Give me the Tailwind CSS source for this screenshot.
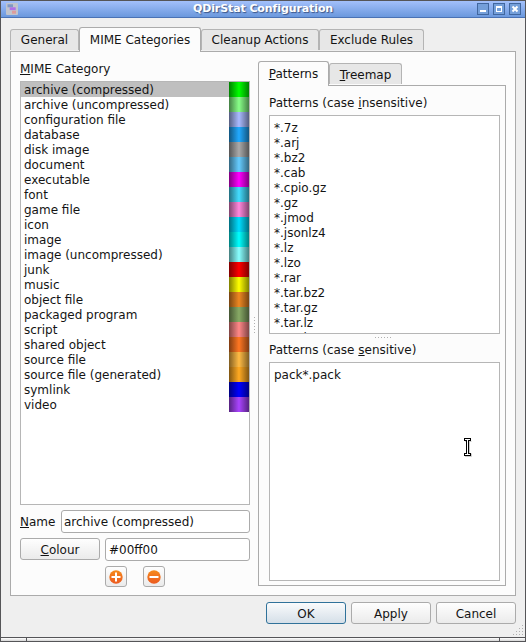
<!DOCTYPE html>
<html lang="en">
<head>
<meta charset="utf-8">
<title>QDirStat Configuration</title>
<script src="https://cdn.jsdelivr.net/npm/@tailwindcss/browser@4"></script>
</head>
<body class="overflow-hidden">
<div class="relative flex h-[642px] w-[526px] flex-col border border-[#555558] bg-[#efefef] font-['DejaVu_Sans',sans-serif] text-[12px] leading-[15px] text-[#141414]">
  <header class="relative flex h-[17px] shrink-0 items-center border-b border-[#4a72b4] bg-linear-to-b from-[#a3c0fb] to-[#6b98dd]">
    <svg class="ml-[5px] size-[12px] shrink-0" viewBox="0 0 12 12"><rect width="12" height="12" rx="1" fill="#c0c4cc"/><rect x="1.500" y="1.300" width="5.500" height="3" fill="#7f98c4"/><rect x="3.700" y="4.300" width="6" height="2.800" fill="#b070e8"/><rect x="6" y="7.700" width="4" height="3" fill="#dd9c9c"/></svg>
    <h1 class="absolute inset-x-0 top-0 text-center text-[11px] font-bold tracking-[-0.1px] text-white [text-shadow:1px_1px_1px_#3c5687]">QDirStat Configuration</h1>
    <div class="ml-auto mr-[4px] flex gap-[4px]">
      <svg class="size-[12px]" viewBox="0 0 12 12"><rect x=".5" y=".5" width="11" height="11" fill="#749fda" stroke="#41679f"/><path d="M3 7h6v2H3z" fill="#fff"/></svg>
      <svg class="size-[12px]" viewBox="0 0 12 12"><rect x=".5" y=".5" width="11" height="11" fill="#749fda" stroke="#41679f"/><path d="M3 3h6v6H3zM4 5v3h4V5z" fill="#fff" fill-rule="evenodd"/></svg>
      <svg class="size-[12px]" viewBox="0 0 12 12"><rect x=".5" y=".5" width="11" height="11" fill="#749fda" stroke="#41679f"/><path d="M3.500 3.500l5 5M8.500 3.500l-5 5" stroke="#fff" stroke-width="2"/></svg>
    </div>
  </header>

  <main class="flex flex-1 flex-col px-[9px] pt-[9px]">
    <nav class="relative z-10 flex h-[24px] items-end">
      <div class="mb-[1px] flex h-[21px] w-[69px] items-center justify-center rounded-t-[3px] border border-b-0 border-[#b4b4b4] bg-[#e7e7e7] pt-px">General</div>
      <div class="mb-[-1px] flex h-[25px] w-[122px] items-center justify-center rounded-t-[3px] border border-b-0 border-[#ababab] bg-[#fcfcfc]">MIME Categories</div>
      <div class="mb-[1px] flex h-[21px] w-[118px] items-center justify-center rounded-t-[3px] border border-b-0 border-[#b4b4b4] bg-[#e7e7e7] pt-px">Cleanup Actions</div>
      <div class="mb-[1px] flex h-[21px] w-[105px] items-center justify-center rounded-t-[3px] border border-b-0 border-[#b4b4b4] bg-[#e7e7e7] pt-px">Exclude Rules</div>
    </nav>
    <section class="flex h-[545px] w-[506px] shrink-0 border border-[#ababab] bg-[#fcfcfc]">
      <div class="ml-[9px] flex w-[230px] flex-col pt-[10px]">
        <label><u class="underline-offset-1">M</u>IME Category</label>
        <ul id="categories" class="mt-[4px] h-[424px] border border-[#b6b6b6] bg-white"></ul>
        <div class="mt-[5px] flex h-[23px] items-center justify-between">
          <label class="pt-[2px]"><u class="underline-offset-1">N</u>ame</label>
          <div class="flex h-[23px] w-[189px] items-center rounded-[3px] border border-[#ababab] bg-white pt-[2px] pl-[2px]">archive (compressed)</div>
        </div>
        <div class="mt-[5px] flex h-[23px] items-start justify-between">
          <button class="h-[22px] w-[80px] rounded-[3px] border border-[#ababab] bg-linear-to-b from-[#fefefe] to-[#ebebeb] pt-[2px]"><u class="underline-offset-1">C</u>olour</button>
          <div class="flex h-[23px] w-[145px] items-center rounded-[3px] border border-[#ababab] bg-white pt-[2px] pl-[3px]">#00ff00</div>
        </div>
        <div class="mt-[5px] ml-[85px] flex gap-[16px]">
          <button class="flex h-[21px] w-[22px] items-center justify-center rounded-[3px] border border-[#ababab] bg-linear-to-b from-[#fefefe] to-[#ebebeb]"><svg class="size-[14px]" viewBox="0 0 14 14"><defs><linearGradient id="orange" x2="0" y2="1"><stop stop-color="#f58a1c"/><stop offset="1" stop-color="#ec5a20"/></linearGradient></defs><circle cx="7" cy="7" r="6.700" fill="url(#orange)"/><path d="M7 2.500v9M2.500 7h9" stroke="#fff" stroke-width="2"/></svg></button>
          <button class="flex h-[21px] w-[22px] items-center justify-center rounded-[3px] border border-[#ababab] bg-linear-to-b from-[#fefefe] to-[#ebebeb]"><svg class="size-[14px]" viewBox="0 0 14 14"><circle cx="7" cy="7" r="6.700" fill="url(#orange)"/><path d="M2.500 7h9" stroke="#fff" stroke-width="2"/></svg></button>
        </div>
      </div>
      <div class="flex w-[8px] items-center justify-center pt-[3px]"><div class="h-[16px] w-px bg-[repeating-linear-gradient(#b0b0b0_0_1px,transparent_1px_3px)]"></div></div>
      <div class="flex w-[248px] flex-col pt-[9px]">
        <nav class="relative z-10 flex h-[24px] items-end">
          <div class="mb-[-1px] flex h-[25px] w-[71px] items-center justify-center rounded-t-[3px] border border-b-0 border-[#ababab] bg-[#fcfcfc]"><span><u class="underline-offset-1">P</u>atterns</span></div>
          <div class="mb-[1px] flex h-[21px] w-[73px] items-center justify-center rounded-t-[3px] border border-b-0 border-[#b4b4b4] bg-[#e7e7e7] pt-[2px]"><span><u class="underline-offset-1">T</u>reemap</span></div>
        </nav>
        <div class="flex h-[501px] flex-col border border-[#ababab] bg-[#fcfcfc] pl-[10px] pt-[10px]">
          <label>Patterns (case <u class="underline-offset-1">i</u>nsensitive)</label>
          <div id="patterns" class="mt-[4px] h-[219px] w-[231px] overflow-hidden border border-[#b6b6b6] bg-white pl-[4px] pt-[5px]"></div>
          <div class="flex h-[9px] w-[228px] items-start justify-center pt-[3px]"><div class="h-px w-[16px] bg-[repeating-linear-gradient(90deg,#b0b0b0_0_1px,transparent_1px_3px)]"></div></div>
          <label>Patterns (case <u class="underline-offset-1">s</u>ensitive)</label>
          <div class="relative mt-[4px] h-[219px] w-[231px] border border-[#b6b6b6] bg-white pl-[4px] pt-[5px]">pack*.pack
            <svg class="absolute left-[193px] top-[74px] h-[20px] w-[9px]" viewBox="0 0 9 20"><path d="M2 4.500h6.500M6.500 5v11M2 19.500h6.500v-3" fill="none" stroke="#ccc"/><path d="M1 1h7v3H6v12h2v3H1v-3h2V4H1z" fill="#000"/><path d="M2 2h5v1H5v14h2v1H2v-1h2V3H2z" fill="#fff"/></svg>
          </div>
        </div>
      </div>
    </section>
    <footer class="mt-[6px] flex w-[506px] justify-end gap-[5px]">
      <button class="h-[22px] w-[80px] rounded-[3px] border border-[#30729a] bg-linear-to-b from-[#fafbfc] to-[#d5dfe8] pt-[2px]">OK</button>
      <button class="h-[22px] w-[80px] rounded-[3px] border border-[#ababab] bg-linear-to-b from-[#fefefe] to-[#ebebeb] pt-[2px]">Apply</button>
      <button class="h-[22px] w-[80px] rounded-[3px] border border-[#ababab] bg-linear-to-b from-[#fefefe] to-[#ebebeb] pt-[2px]">Cancel</button>
    </footer>
  </main>
  <svg class="absolute right-[1px] bottom-[5px] size-[11px]" viewBox="0 0 11 11" fill="#b0b0b0"><path d="M9 0h1v1H9zM9 3h1v1H9zM6 3h1v1H6zM9 6h1v1H9zM6 6h1v1H6zM3 6h1v1H3zM9 9h1v1H9zM6 9h1v1H6zM3 9h1v1H3zM0 9h1v1H0z"/></svg>
  <div class="flex h-[4px] shrink-0 border-t border-[#555558] bg-linear-to-b from-white to-[#d6d6d6]">
    <div class="w-[26px] border-r border-[#555558]"></div>
    <div class="w-[473px] border-r border-[#555558]"></div>
  </div>
</div>
<script>
const categories = [
  ['archive (compressed)', '#00ff00'], ['archive (uncompressed)', '#88ff88'], ['configuration file', '#aabbff'],
  ['database', '#22aaff'], ['disk image', '#aaaaaa'], ['document', '#66ccff'], ['executable', '#ff00ff'],
  ['font', '#44ddff'], ['game file', '#ff88dd'], ['icon', '#00ddff'], ['image', '#00ffff'],
  ['image (uncompressed)', '#88ffff'], ['junk', '#ff0000'], ['music', '#ffff00'], ['object file', '#ee8822'],
  ['packaged program', '#88aa66'], ['script', '#ff8888'], ['shared object', '#ff7722'], ['source file', '#ffbb44'],
  ['source file (generated)', '#ffaa22'], ['symlink', '#0000ff'], ['video', '#aa44ff']
];
document.getElementById('categories').innerHTML = categories.map(([name, color], i) =>
  `<li class="flex h-[15px] justify-between pl-[3px] ${i ? '' : 'bg-[#bfbfbf]'}"><span class="pt-px">${name}</span><span class="w-[20px] bg-linear-to-r from-black/50 via-black/0 to-black/50" style="background-color:${color}"></span></li>`).join('');
const patterns = ['*.7z', '*.arj', '*.bz2', '*.cab', '*.cpio.gz', '*.gz', '*.jmod', '*.jsonlz4', '*.lz', '*.lzo', '*.rar', '*.tar.bz2', '*.tar.gz', '*.tar.lz', '*.tar.lzo'];
document.getElementById('patterns').innerHTML = patterns.map(p => `<div>${p}</div>`).join('');
</script>
</body>
</html>
